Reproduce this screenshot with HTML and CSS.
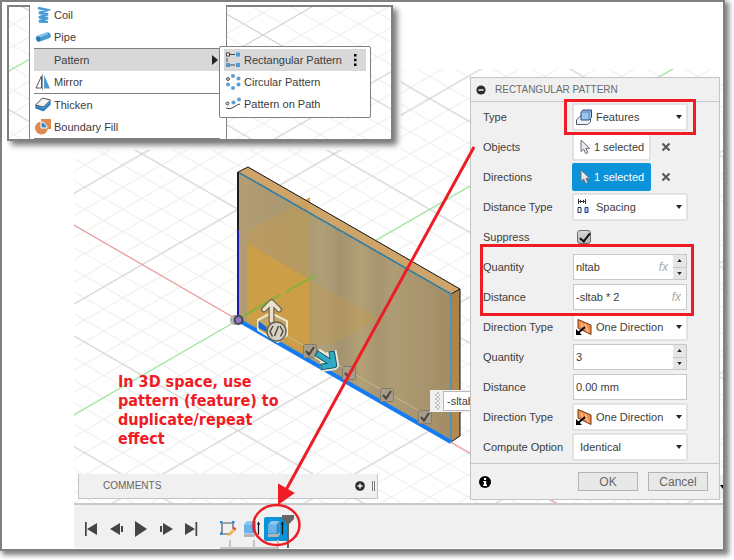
FILE: index.html
```
<!DOCTYPE html>
<html lang="en">
<head>
<meta charset="utf-8">
<title>Rectangular Pattern</title>
<link rel="stylesheet" href="styles.css">
</head>
<body>
<svg class="defs" aria-hidden="true">
  <defs>
    <symbol id="i-cursor" viewBox="0 0 12 16"><path d="M2 1v11.500l2.700-2.400 2 4.500 2.200-1-2-4.300h3.800z" fill="#e9e9ee" stroke="#6b6f78"/></symbol>
    <symbol id="i-x" viewBox="0 0 10 10"><path d="M1.500 1.500l7 7m0-7l-7 7" stroke="#5a5a5a" stroke-width="2.200"/></symbol>
    <symbol id="i-dir" viewBox="0 0 16 16"><path d="M2 .5l13 5.500v9.500L2 9z" fill="#f58c46" stroke="#6a3a18"/><path d="M5 4l3 6M9 5l3 8" stroke="#fbc39a" stroke-width="1.500"/><path d="M9 8l-7 6" stroke="#000" stroke-width="2"/><path d="M0 10v6h6z"/></symbol>
    <symbol id="i-caret" viewBox="0 0 6 4"><path d="M0 0h6L3 4z" fill="#222"/></symbol>
    <symbol id="i-check" viewBox="0 0 14 14"><rect x=".5" y=".5" width="13" height="13" rx="1" fill="#a69c87" stroke="#857d6c"/><path d="M3 7l3 3.500L11 3" fill="none" stroke="#4a443a" stroke-width="2"/></symbol>
    <symbol id="i-box" viewBox="0 0 18 18"><path d="M1 14h10l2-2v2.500l-2 2.500H1z" fill="#b4b4b4"/><path d="M1 4.500L4 1h8.500v9.500l-3 3H2q-1 0-1-1z" fill="#6ab2e8"/><path d="M1.500 4.500L4 1h8.500l-3 3.500z" fill="#8cc8f2"/><path d="M9.500 4.500l3-3.500v9.500l-3 3z" fill="#3f8cc8"/><path d="M15.500 14.500V3" stroke="#111" stroke-width="1.200"/><path d="M13.800 4.500L15.500 1.500l1.700 3z" fill="#111"/></symbol>
    <pattern id="minor" width="38.340" height="22.140" patternUnits="userSpaceOnUse"><path d="M0 0l38.340 22.140M0 22.140L38.340 0" stroke="#ebebeb"/></pattern>
    <pattern id="major" width="191.700" height="110.700" patternUnits="userSpaceOnUse"><path d="M0 0l191.700 110.700M0 110.700L191.700 0" stroke="#cdcdcd"/></pattern>
    <linearGradient id="wood" x1="238" x2="451" y1="0" y2="0" gradientUnits="userSpaceOnUse">
      <stop offset="0" stop-color="#b29c74"/><stop offset=".3" stop-color="#a89870"/><stop offset=".4" stop-color="#afa078"/><stop offset=".48" stop-color="#a39370"/><stop offset=".58" stop-color="#b3a075"/><stop offset=".66" stop-color="#a69570"/><stop offset=".72" stop-color="#ad9c74"/><stop offset="1" stop-color="#a28c66"/>
    </linearGradient>
    <linearGradient id="side" x1="0" x2="0" y1="0" y2="1"><stop offset="0" stop-color="#a9824a"/><stop offset="1" stop-color="#b58a50"/></linearGradient>
  </defs>
</svg>

<main class="frame">
  <section class="viewport" aria-label="3D view">
    <svg class="scene" aria-hidden="true">
      <g transform="translate(-2 -2)">
        <g transform="translate(238 320)">
          <path d="M-164-170H163V-251H485V184H-164z" fill="url(#minor)"/>
          <path d="M-164-170H163V-251H485V184H-164z" fill="url(#major)"/>
        </g>
        <path d="M74 225l164 95M451 442l108 62.500" stroke="#ff8a8a"/>
        <path d="M74 415l164-95M375 241L673 69" stroke="#8cf58c"/>
        <path d="M720 475h3v24h-3z" fill="#efefef"/><path d="M720 485h3v4z"/>
        <path d="M238 172l10-5 212 122-9 5z" fill="#cfa468"/>
        <path d="M451 294l9-5v147l-9 6z" fill="url(#side)"/>
        <path d="M238 172l213 122v148L238 320z" fill="url(#wood)"/>
        <path d="M247 232l55-31 7 4v74l-62-36z" fill="#c89a4c" opacity=".4"/>
        <path d="M247 243l62 36v78l-62-36z" fill="#cf9e42" opacity=".9"/>
        <path d="M309 279l9 5 60 34-45 25-24 4z" fill="#c49a50" opacity=".4"/>
        <path d="M305 200l5-3v6z" fill="#efa545"/>
        <path d="M240 318l40-23m6-3l29-17" stroke="#7fb53c" stroke-width="2"/>
        <path d="M238 172l10-5 212 122v147l-9 6" fill="none" stroke="#111"/>
        <path d="M451 294l9-5" stroke="#111"/>
        <path d="M238 172l213 122v148" fill="none" stroke="#4e96b0" stroke-width="2"/>
        <path d="M238 172l213 122" stroke="#24465a" stroke-dasharray="1 1"/>
        <path d="M238 172v60" stroke="#1c1c1c" stroke-width="2"/>
        <path d="M238 230v88" stroke="#1c1ca8" stroke-width="2"/>
        <path d="M280 332l150 85" stroke="#c9b893"/>
        <path d="M238 320l213 122" stroke="#147bf2" stroke-width="4"/>
        <circle cx="235" cy="320" r="4.500" fill="#bbb" stroke="#999"/>
        <circle cx="238.500" cy="320" r="4" fill="#9a78c8" stroke="#464650" stroke-width="2"/>
        <path d="M258 320l13-7 16 8v14l-9 7-20-12z" fill="#c4a663" stroke="#efe6d2" stroke-width="2"/>
        <path d="M258.500 321l8 6v5l-8-4z" fill="#1769d0"/>
        <g fill="none" stroke-linejoin="round" stroke-linecap="round">
          <path d="M271.500 321v-18M264 309.500l7.500-7.500 7.500 7.500" stroke="#6f6450" stroke-width="6"/>
          <path d="M271.500 321v-18M264 309.500l7.500-7.500 7.500 7.500" stroke="#ece2cc" stroke-width="3.500"/>
        </g>
        <circle cx="276.500" cy="331.500" r="9.500" fill="#d8d2c4" stroke="#66604f" stroke-width="1.500"/>
        <path d="M273 326l-3 5.500 2.500 5M280 326l3 5.500-2.500 5M274.500 336l4-10" fill="none" stroke="#4e4a42" stroke-width="1.500"/>
        <use href="#i-check" x="303" y="344" width="14" height="14"/>
        <use href="#i-check" x="342" y="366" width="14" height="14"/>
        <use href="#i-check" x="380" y="388" width="14" height="14"/>
        <use href="#i-check" x="418" y="410" width="14" height="14"/>
        <g fill="none" stroke-linejoin="round">
          <path d="M317 353l17 11.500M331.500 351l2.500 14-13.500 2" stroke="#f3ecdc" stroke-width="10"/>
          <path d="M316 353l18 11.500M331.500 351l2.500 14-13.500 2" stroke="#155968" stroke-width="6.500"/>
          <path d="M317 353.500l17 11M331.500 352l2.500 13-12.500 2" stroke="#2fa9c4" stroke-width="4.500"/>
        </g>
      </g>
    </svg>

    <div class="distance-tag"><span class="grip"></span><input type="text" value="-sltab * 2" aria-label="Distance value"></div>

    <p class="note">In 3D space, use<br>pattern (feature) to<br>duplicate/repeat<br>effect</p>

    <div class="inset">
      <svg class="scene" aria-hidden="true">
        <g transform="translate(254 28)">
          <rect x="-254" y="-28" width="384" height="134" fill="url(#minor)"/>
          <rect x="-254" y="-28" width="384" height="134" fill="url(#major)"/>
          <path d="M-254 36l20-11.500" stroke="#8cf58c"/>
        </g>
      </svg>
      <ul class="menu">
        <li><button><svg viewBox="0 0 16 16"><path d="M3 1l9 2-8 3 9 1-9 3.500 9 .5-9 3.500 9 .5" fill="none" stroke="#4a9bd8" stroke-width="2.600"/></svg>Coil</button></li>
        <li class="rule"><button><svg viewBox="0 0 16 16"><path d="M4 9.500l8.500-3" stroke="#4c9ad4" stroke-width="6.500" stroke-linecap="round"/><path d="M4 7.500l8-3" stroke="#8cc8f0" stroke-width="2" stroke-linecap="round"/><ellipse cx="3.500" cy="10" rx="2" ry="2.500" fill="#2d78b0"/></svg>Pipe</button></li>
        <li><button class="active"><svg viewBox="0 0 16 16"></svg>Pattern<svg class="more" viewBox="0 0 6 10"><path d="M0 0l6 5-6 5z" fill="#222"/></svg></button></li>
        <li class="rule"><button><svg viewBox="0 0 16 16"><path d="M6.500 2v12H1z" fill="#fff" stroke="#555"/><path d="M9 1l6 13.500H9z" fill="#4a9bd8"/><path d="M7.500 0v16" stroke="#999"/></svg>Mirror</button></li>
        <li><button><svg viewBox="0 0 16 16"><path d="M.5 8l7-7 8 2v5l-7 6.500-8-3z" fill="#4a9bd8"/><path d="M.5 8l7-7 8 2-7 7z" fill="#f2f2f2" stroke="#555"/><path d="M.5 9l8 3 7-7v2l-7 7-8-3z" fill="#2c79b5"/></svg>Thicken</button></li>
        <li class="rule"><button><svg viewBox="0 0 16 16"><path d="M6 0h10v10h-4L6 4z" fill="#e08a52"/><circle cx="6.500" cy="9" r="6.500" fill="#e08a52"/><path d="M6 3a6 6 0 0 1 6 6H6z" fill="#3a8dce" stroke="#fff"/></svg>Boundary Fill</button></li>
      </ul>
      <ul class="submenu">
        <li><button class="active"><svg viewBox="0 0 16 16"><path d="M5 2.500h5M2 6v4M5 13h5" stroke="#444"/><rect x="1.500" y="1" width="3" height="3" fill="#fff" stroke="#444"/><path d="M11 .5h4v4h-4zM1 11h4v4H1zM11 11h4v4h-4z" fill="#4a9bd8"/></svg>Rectangular Pattern<svg class="dots" viewBox="0 0 4 12"><path d="M1 0h2.500v2.500H1zM1 4.800h2.500v2.500H1zM1 9.500h2.500v2.500H1z"/></svg></button></li>
        <li><button><svg viewBox="0 0 16 16"><g fill="#5a9fd6"><circle cx="8" cy="2" r="2"/><circle cx="13.500" cy="4.500" r="2"/><circle cx="13.500" cy="10.500" r="2"/><circle cx="8" cy="14" r="2"/><circle cx="3" cy="10.500" r="2"/></g><circle cx="3" cy="5" r="1.500" fill="#ccc" stroke="#555"/></svg>Circular Pattern</button></li>
        <li><button><svg viewBox="0 0 16 16"><path d="M1 12q4 2 8-1t6-3" fill="none" stroke="#444"/><circle cx="2.500" cy="7.500" r="1.500" fill="#ccc" stroke="#555"/><circle cx="8.500" cy="6.500" r="2" fill="#5a9fd6"/><circle cx="14" cy="3.500" r="2" fill="#5a9fd6"/></svg>Pattern on Path</button></li>
      </ul>
    </div>

    <div class="comments">
      <span>COMMENTS</span>
      <button aria-label="Add comment"><svg viewBox="0 0 10 10"><circle cx="5" cy="5" r="4.800" fill="#2b2b2b"/><path d="M2.500 5h5M5 2.500v5" stroke="#fff" stroke-width="1.400"/></svg></button>
      <span class="handle"></span>
    </div>

    <form class="dialog">
      <header><svg viewBox="0 0 10 10"><circle cx="5" cy="5" r="4.600" fill="#2b2b2b"/><path d="M2.500 5h5" stroke="#fff" stroke-width="1.400"/></svg><h1>RECTANGULAR PATTERN</h1></header>
      <div class="rows">
        <div class="row"><label for="type">Type</label>
          <div class="select mark"><svg class="ico" viewBox="0 0 16 16"><path d="M.5 11l4-4h7v4l3-1v3l-3 2.500H.5z" fill="#f2f2f6" stroke="#555a70"/><path d="M5 3l2-2h8.500v7.500L13 11H5z" fill="#9cc4ec" stroke="#274a86"/><path d="M5 3h8v8M13 3l2.500-2" fill="none" stroke="#5f86bd"/></svg><select id="type"><option>Features</option></select><svg class="caret"><use href="#i-caret"/></svg></div></div>
        <div class="row"><label for="objects">Objects</label>
          <button type="button" class="pick" id="objects"><svg><use href="#i-cursor"/></svg>1 selected</button><button type="button" class="clear" aria-label="Clear objects"><svg><use href="#i-x"/></svg></button></div>
        <div class="row"><label for="directions">Directions</label>
          <button type="button" class="pick on" id="directions"><svg><use href="#i-cursor"/></svg>1 selected</button><button type="button" class="clear" aria-label="Clear directions"><svg><use href="#i-x"/></svg></button></div>
        <div class="row"><label for="dtype">Distance Type</label>
          <div class="select"><svg class="ico" viewBox="0 0 16 16"><path d="M2.500 0v5M9.500 0v5M3 2.500h6M5 1L3.500 2.500 5 4M7 1l1.500 1.500L7 4" fill="none" stroke="#333"/><path d="M2 8.500h3v5H2z" fill="#fff" stroke="#1b2f60"/><path d="M9 8.500h3v5H9z" fill="#9cc4ec" stroke="#1b3f90"/></svg><select id="dtype"><option>Spacing</option></select><svg class="caret"><use href="#i-caret"/></svg></div></div>
        <div class="row"><label for="suppress">Suppress</label><input type="checkbox" id="suppress" checked></div>
        <div class="marked">
          <div class="row"><label for="q1">Quantity</label>
            <div class="field"><input type="text" id="q1" value="nltab"><i>fx</i><span class="spin"><button type="button" aria-label="Increase"><svg class="up"><use href="#i-caret"/></svg></button><button type="button" aria-label="Decrease"><svg><use href="#i-caret"/></svg></button></span></div></div>
          <div class="row"><label for="d1">Distance</label>
            <div class="field"><input type="text" id="d1" value="-sltab * 2"><i>fx</i></div></div>
        </div>
        <div class="row"><label for="dir1">Direction Type</label>
          <div class="select"><svg class="ico"><use href="#i-dir"/></svg><select id="dir1"><option>One Direction</option></select><svg class="caret"><use href="#i-caret"/></svg></div></div>
        <div class="row"><label for="q2">Quantity</label>
          <div class="field"><input type="text" id="q2" value="3"><span class="spin"><button type="button" aria-label="Increase"><svg class="up"><use href="#i-caret"/></svg></button><button type="button" aria-label="Decrease"><svg><use href="#i-caret"/></svg></button></span></div></div>
        <div class="row"><label for="d2">Distance</label>
          <div class="field"><input type="text" id="d2" value="0.00 mm"></div></div>
        <div class="row"><label for="dir2">Direction Type</label>
          <div class="select"><svg class="ico"><use href="#i-dir"/></svg><select id="dir2"><option>One Direction</option></select><svg class="caret"><use href="#i-caret"/></svg></div></div>
        <div class="row"><label for="compute">Compute Option</label>
          <div class="select plain"><select id="compute"><option>Identical</option></select><svg class="caret"><use href="#i-caret"/></svg></div></div>
      </div>
      <footer>
        <svg viewBox="0 0 12 12"><circle cx="6" cy="6" r="6"/><path d="M5 2h2.200v2H5zM4.200 5h3v3.500h.8V10H4.200V8.500H5V6.300h-.8z" fill="#fff"/></svg>
        <button type="button">OK</button><button type="button">Cancel</button>
      </footer>
    </form>
  </section>

  <nav class="timeline" aria-label="Timeline">
    <div class="transport">
      <button aria-label="To start"><svg viewBox="0 0 14 14"><path d="M0 0h1.700v14H0zM12 1v12L2 7z"/></svg></button>
      <button aria-label="Step back"><svg viewBox="0 0 14 14"><path d="M10 1v12L0 7zM11 4h2v6h-2z"/></svg></button>
      <button aria-label="Play"><svg viewBox="0 0 14 14"><path d="M0-1l12 8-12 8z"/></svg></button>
      <button aria-label="Step forward"><svg viewBox="0 0 14 14"><path d="M3 1v12l10-6zM0 4h2v6H0z"/></svg></button>
      <button aria-label="To end"><svg viewBox="0 0 14 14"><path d="M0 1v12l10-6zM10.500 0h1.700v14h-1.700z"/></svg></button>
    </div>
    <div class="features">
      <button aria-label="Sketch"><svg viewBox="0 0 18 18"><path d="M3.500 3h11M3.500 14h7M3 3.500v10M14 4v5" stroke="#555" stroke-width="1.200"/><path d="M1 1h2.500v2.500H1zM13 1h2.500v2.500H13zM1 12.500h2.500V15H1z" fill="#1c86d8"/><path d="M9 16l1-3 4.500-5 2 2-4.500 5z" fill="#f0b545"/><path d="M14 8.500l1.500-1.500 2 2-1.500 1.500z" fill="#e24040"/></svg></button>
      <button aria-label="Extrude"><svg><use href="#i-box"/></svg></button>
      <button class="current" aria-label="Extrude, current"><svg><use href="#i-box"/></svg></button>
      <svg class="playhead" viewBox="0 0 12 33"><path d="M0 0h12v4L7 9v24H5V9L0 4z" fill="#666"/></svg>
    </div>
  </nav>

  <svg class="annotations" aria-hidden="true">
    <g transform="translate(-2 -2)" stroke="#ee1c25" stroke-width="3">
      <path d="M474 147L286 490" stroke-width="3"/>
      <path d="M279 485l14 8-14 10z" fill="#ee1c25" stroke-width="2"/>
      <ellipse cx="276.500" cy="525" rx="23" ry="20" fill="none" stroke-width="2.500"/>
    </g>
  </svg>
</main>
</body>
</html>
```
FILE: styles.css
```
* { box-sizing: border-box; }
body {
  margin: 0;
  background: #fff;
  color: #3c3c3c;
  font: 11px/14px "Liberation Sans", Arial, sans-serif;
}
button, input, select { font: inherit; color: inherit; margin: 0; }
button { border: 0; padding: 0; background: none; }
ul { list-style: none; margin: 0; padding: 0; }
.defs { position: absolute; width: 0; height: 0; }

.frame {
  position: relative;
  display: flex;
  flex-direction: column;
  min-height: calc(100vh - 9px);
  margin: 0 9px 9px 0;
  border: 2px solid #808080;
  background: #fff;
  box-shadow: 3px 3px 5px 1px rgba(0, 0, 0, .5);
}
.viewport { position: relative; flex: 1; min-height: 500px; overflow: hidden; }
.scene { position: absolute; inset: 0; width: 100%; height: 100%; }
.annotations { position: absolute; inset: 0; width: 100%; height: 100%; pointer-events: none; }

.note {
  position: absolute;
  left: 116px;
  top: 370px;
  margin: 0;
  color: #ee1c25;
  font: bold 16px/19px "DejaVu Sans Condensed", Tahoma, "DejaVu Sans", sans-serif;
  white-space: nowrap;
}

.distance-tag {
  position: absolute;
  left: 428px;
  top: 388px;
  display: flex;
  align-items: center;
  gap: 3px;
  width: 120px;
  height: 22px;
  padding-left: 5px;
  background: #f0f0f0;
}
.grip { width: 5px; height: 18px; background: repeating-conic-gradient(#c4c4c4 0 25%, #f0f0f0 0 50%) 0 0 / 4px 4px; }
.distance-tag input { width: 100px; height: 20px; padding: 0 3px; border: 1px solid #b8b8b8; background: #fff; }

/* Menu window */
.inset {
  position: absolute;
  left: 5px;
  top: 3px;
  display: flex;
  align-items: flex-end;
  width: 386px;
  height: 136px;
  border: 2px solid #808080;
  background: #fff;
  box-shadow: 4px 4px 6px rgba(0, 0, 0, .55);
  clip-path: inset(0 -14px -14px 0);
}
.menu {
  position: relative;
  width: 198px;
  margin-left: 20px;
  padding: 0 6px 0 4px;
  border: solid #808080;
  border-width: 0 1px;
  background: #fff;
}
.menu .rule { border-bottom: 1px solid #808080; }
.menu button, .submenu button {
  display: flex;
  align-items: center;
  gap: 3px;
  width: 100%;
  height: 22px;
  padding-left: 1px;
  text-align: left;
}
.menu button svg, .submenu button svg { width: 16px; height: 16px; }
.menu .active, .submenu .active { background: #d8d8d8; }
.menu button .more { width: 6px; height: 10px; margin: 0 2px 0 auto; }
.submenu {
  position: absolute;
  left: 210px;
  top: 39px;
  width: 152px;
  padding: 2px 4px;
  border: 1px solid #808080;
  border-radius: 2px;
  background: #fff;
}
.submenu button .dots { width: 4px; height: 12px; margin: 0 9px 0 auto; }

.comments {
  position: absolute;
  left: 76px;
  bottom: 4px;
  display: flex;
  align-items: center;
  width: 300px;
  height: 25px;
  padding: 0 2px 0 24px;
  border: solid #c4c4c4;
  border-width: 0 1px 1px;
  background: #f0f0f0;
  color: #666;
  font-size: 10px;
}
.comments button { width: 10px; height: 14px; margin-left: auto; }
.comments svg { display: block; width: 10px; height: 14px; }
.handle { width: 3px; height: 10px; margin-left: 7px; border: solid #808080; border-width: 0 1px; }

/* Dialog */
.dialog {
  position: absolute;
  left: 468px;
  top: 75px;
  width: 250px;
  border: 1px solid #c4c4c4;
  background: #f0f0f0;
}
.dialog header {
  display: flex;
  align-items: center;
  gap: 9px;
  height: 24px;
  padding-left: 5px;
  border-bottom: 1px solid #c8c8c8;
}
.dialog header svg { width: 10px; height: 10px; }
.dialog h1 { margin: 0; color: #6a6a6a; font-size: 10px; font-weight: 400; }
.rows { padding: 0 0 1px 12px; }
.row { display: flex; align-items: center; height: 30px; }
.row label { width: 89px; }
.select { position: relative; width: 116px; height: 28px; }
.select select {
  width: 100%;
  height: 100%;
  padding: 0 16px 0 22px;
  border: 2px solid #e2e2e2;
  border-radius: 2px;
  background: #fff;
  appearance: none;
}
.plain select { padding-left: 6px; }
.select .ico { position: absolute; left: 4px; top: 6px; width: 16px; height: 16px; }
.select .caret { position: absolute; right: 6px; top: 12px; width: 6px; height: 4px; }
.mark::after, .marked::after {
  content: "";
  position: absolute;
  z-index: 1;
  inset: -4px -8px;
  border: 3px solid #ee1c25;
  pointer-events: none;
}
.marked { position: relative; }
.marked::after { inset: -8px 25px -4px -3px; }
.pick {
  display: flex;
  align-items: center;
  gap: 3px;
  width: 79px;
  height: 28px;
  padding-left: 5px;
  border: 2px solid #e2e2e2;
  border-radius: 2px;
  background: #fff;
}
.pick svg { width: 12px; height: 16px; }
.pick.on { border-color: #0a93d8; background: #0a93d8; color: #fff; }
.clear { width: 10px; height: 10px; margin-left: 10px; }
.clear svg { display: block; width: 10px; height: 10px; }
.row input[type="checkbox"] {
  appearance: none;
  width: 14px;
  height: 14px;
  margin-left: 5px;
  border: 1px solid #6e6e6e;
  border-radius: 3px;
  background: linear-gradient(#d8d8d8, #b4b4b4);
}
.row input[type="checkbox"]::after {
  content: "";
  display: block;
  width: 4px;
  height: 9px;
  margin: 0 0 0 4px;
  border: solid #111;
  border-width: 0 2px 2px 0;
  transform: rotate(38deg);
}
.field {
  display: flex;
  align-items: center;
  width: 114px;
  height: 26px;
  margin-left: 1px;
  border: 1px solid #c8c8c8;
  background: #fff;
}
.field input { flex: 1; min-width: 0; height: 100%; padding: 0 2px; border: 0; background: none; }
.field i { margin-right: 5px; color: #aaa; font-size: 12px; }
.spin { display: flex; flex-direction: column; gap: 1px; width: 13px; height: 24px; background: #c8c8c8; }
.spin button { flex: 1; display: grid; place-items: center; background: #e6e6e6; }
.spin svg { width: 5px; height: 3px; }
.spin .up { transform: rotate(180deg); }
.dialog footer {
  display: flex;
  align-items: center;
  gap: 10px;
  height: 36px;
  padding: 0 11px 0 8px;
  border-top: 1px solid #c8c8c8;
}
.dialog footer svg { width: 12px; height: 12px; margin-right: auto; }
.dialog footer button {
  width: 60px;
  height: 19px;
  border: 1px solid #b4b4b4;
  background: #e8e8e8;
  color: #666;
  font-size: 12px;
}

/* Timeline */
.timeline {
  display: flex;
  align-items: center;
  gap: 17px;
  height: 45px;
  margin: 0 0 1px 72px;
  padding: 4px 0 0 11px;
  border-top: 2px solid #c8caca;
  background: #f0f0f0;
}
.transport { display: flex; gap: 11px; }
.transport button { width: 14px; height: 14px; }
.transport svg { display: block; width: 14px; height: 14px; overflow: visible; fill: #444; }
.features { position: relative; display: flex; height: 24px; }
.features button { position: relative; display: grid; place-items: center; width: 24px; height: 24px; border-radius: 2px; }
.features button svg { width: 18px; height: 18px; }
.features .current { background: #0a93d8; }
.features button::after {
  content: "";
  position: absolute;
  left: 4px;
  top: 23px;
  width: 9px;
  height: 7px;
  border: solid #c4c4c4;
  border-width: 0 2px 2px 0;
}
.features button + button::after { left: -11px; width: 24px; }
.features .playhead { position: absolute; left: 66px; top: -2px; width: 12px; height: 33px; }
```
